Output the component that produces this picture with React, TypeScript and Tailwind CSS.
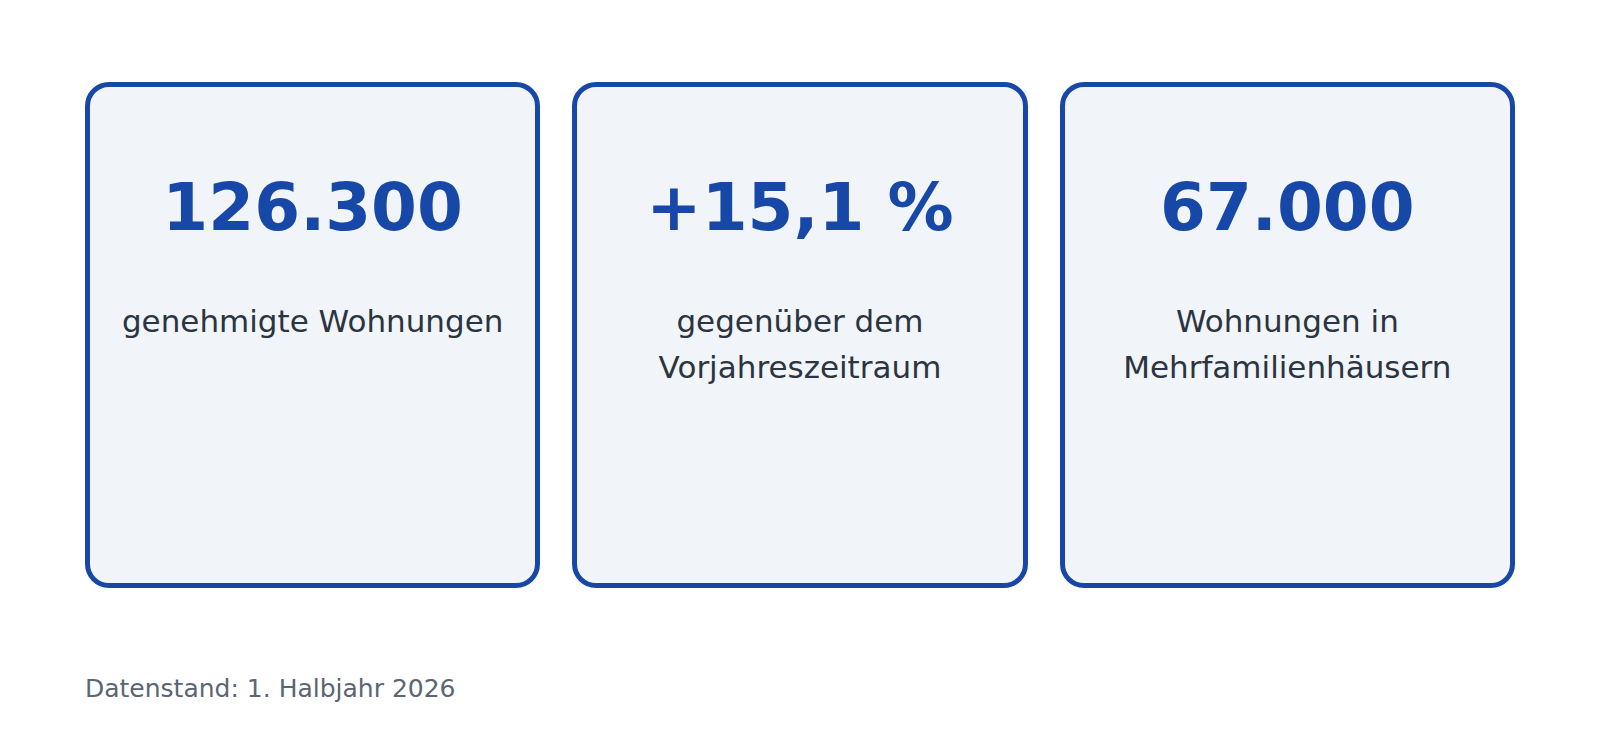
import React from "react";

const cards = [
  { value: "126.300", label: ["genehmigte Wohnungen"] },
  { value: "+15,1 %", label: ["gegenüber dem", "Vorjahreszeitraum"] },
  { value: "67.000", label: ["Wohnungen in", "Mehrfamilienhäusern"] },
];

export default function App() {
  return (
    <div
      className="w-[1600px] h-[752px] bg-white px-[85px] pt-[82px]"
      style={{ fontFamily: '"DejaVu Sans", sans-serif' }}
    >
      <div className="grid grid-cols-3 gap-[32px]">
        {cards.map((c) => (
          <div
            key={c.value}
            className="h-[506px] rounded-[24px] border-[5px] border-[#1748a8] bg-[#f1f5f9] flex flex-col items-center pt-[88px]"
          >
            <div className="text-[66px] leading-none font-bold text-[#1748a8]">
              {c.value}
            </div>
            <div className="mt-[57px] text-[31px] leading-[46px] text-[#2b3441] text-center">
              {c.label.map((l) => (
                <div key={l}>{l}</div>
              ))}
            </div>
          </div>
        ))}
      </div>
      <div className="mt-[82px] text-[25px] text-[#5b6574]">
        Datenstand: 1. Halbjahr 2026
      </div>
    </div>
  );
}
